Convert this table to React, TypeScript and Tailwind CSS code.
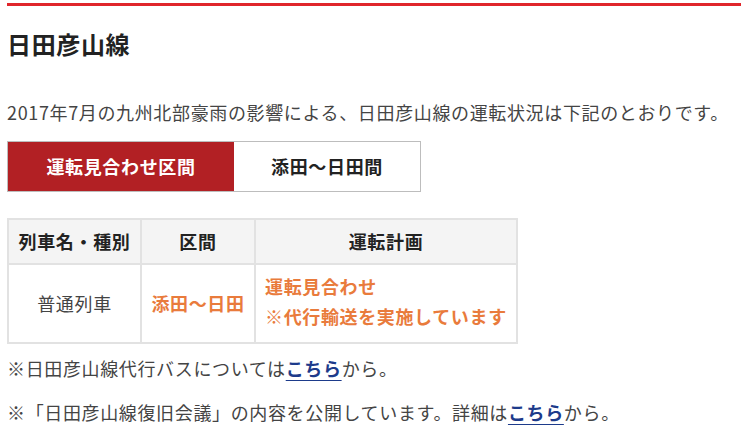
export default function App() {
    const font = { fontFamily: '"Noto Sans CJK JP", "Noto Sans", sans-serif' };

    return (
        <div className="min-h-screen bg-white text-[#333] pl-[7px] tracking-[0.04em]" style={font}>
            {/* top rule */}
            <div className="h-[3px] mt-[3px] bg-[#e0262b]" />

            <h1 className="mt-[22px] text-[24px] leading-[32px] font-bold text-[#222]">日田彦山線</h1>

            <p className="mt-[38px] text-[18px] leading-[28px] text-[#444] whitespace-nowrap">
                2017年7月の九州北部豪雨の影響による、日田彦山線の運転状況は下記のとおりです。
            </p>

            {/* Tabs */}
            <div className="mt-[15px] flex w-[414px] h-[51px] border border-[#bdbdbd]">
                <div className="w-[226px] flex items-center justify-center bg-[#b22024] text-white text-[18px] font-bold">
                    運転見合わせ区間
                </div>
                <div className="flex-1 flex items-center justify-center bg-white text-[#222] text-[18px] font-bold">
                    添田〜日田間
                </div>
            </div>

            {/* Status table */}
            <table className="mt-[26px] w-[511px] border-collapse text-[18px]">
                <thead>
                    <tr className="h-[45px] bg-[#f4f4f4]">
                        <th className="w-[133px] border-2 border-[#e2e2e2] font-bold text-[#222]">列車名・種別</th>
                        <th className="w-[114px] border-2 border-[#e2e2e2] font-bold text-[#222]">区間</th>
                        <th className="border-2 border-[#e2e2e2] font-bold text-[#222]">運転計画</th>
                    </tr>
                </thead>
                <tbody>
                    <tr className="h-[79px]">
                        <td className="border-2 border-[#e2e2e2] text-center text-[#444]">普通列車</td>
                        <td className="border-2 border-[#e2e2e2] text-center font-bold text-[#e97b3c]">添田〜日田</td>
                        <td className="border-2 border-[#e2e2e2] pl-[9px] pb-[5px] font-bold text-[#e97b3c] leading-[30px] whitespace-nowrap">
                            運転見合わせ
                            <br />
                            ※代行輸送を実施しています
                        </td>
                    </tr>
                </tbody>
            </table>

            <p className="mt-[10px] text-[18px] leading-[28px] text-[#444]">
                ※日田彦山線代行バスについては
                <a href="#" className="font-bold text-[#1d3b8b] underline underline-offset-4">こちら</a>
                から。
            </p>
            <p className="mt-[16px] text-[18px] leading-[28px] text-[#444] whitespace-nowrap">
                ※「日田彦山線復旧会議」の内容を公開しています。詳細は
                <a href="#" className="font-bold text-[#1d3b8b] underline underline-offset-4">こちら</a>
                から。
            </p>
        </div>
    );
}
